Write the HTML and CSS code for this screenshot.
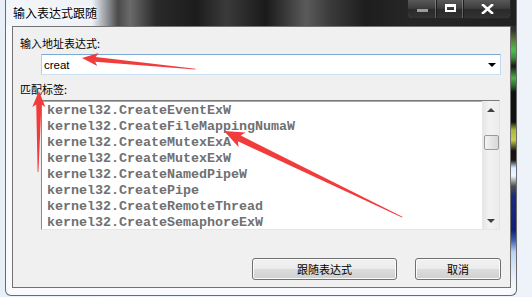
FILE: index.html
```html
<!DOCTYPE html>
<html lang="zh-CN">
<head>
    <meta charset="UTF-8">
    <title>输入表达式跟随</title>
    <link rel="stylesheet" href="styles.css">
</head>
<body>
    <div class="desk">
        <div class="window">
            <div class="titlebar">
                <span class="title">输入表达式跟随</span>
                <div class="caption-btns">
                    <span class="cb cb-min"><i class="min-bar"></i></span>
                    <span class="cb cb-max"><i class="max-box"></i></span>
                    <span class="cb cb-close">
                        <svg width="13" height="10" viewBox="0 0 13 10">
                            <path d="M2 1 L11 9 M11 1 L2 9" stroke="#fff" stroke-width="2.6" stroke-linecap="square"/>
                        </svg>
                    </span>
                </div>
            </div>

            <div class="client">
                <div class="label">输入地址表达式:</div>
                <div class="combo">
                    <span class="combo-text">creat</span>
                    <span class="combo-arrow"></span>
                </div>

                <div class="label">匹配标签:</div>
                <div class="list">
                    <div class="items">
                        <div class="item">kernel32.CreateEventExW</div>
                        <div class="item">kernel32.CreateFileMappingNumaW</div>
                        <div class="item">kernel32.CreateMutexExA</div>
                        <div class="item">kernel32.CreateMutexExW</div>
                        <div class="item">kernel32.CreateNamedPipeW</div>
                        <div class="item">kernel32.CreatePipe</div>
                        <div class="item">kernel32.CreateRemoteThread</div>
                        <div class="item">kernel32.CreateSemaphoreExW</div>
                    </div>
                    <div class="scrollbar">
                        <div class="sb-btn"><span class="tri-up"></span></div>
                        <div class="sb-thumb"></div>
                        <div class="sb-track"></div>
                        <div class="sb-btn"><span class="tri-down"></span></div>
                    </div>
                </div>

                <div class="buttons">
                    <button class="btn btn-follow">跟随表达式</button>
                    <button class="btn btn-cancel">取消</button>
                </div>
            </div>
        </div>

        <!-- red annotation arrows drawn over the dialog -->
        <svg class="marks" width="532" height="297" viewBox="0 0 532 297">
            <g fill="#f23c3c">
                <polygon transform="translate(82 58) rotate(5.6)" points="0,0 16,-6.5 13.5,-2.4 114,-0.4 114,0.4 13.5,2.4 16,6.5"/>
                <polygon transform="translate(39 91) rotate(90.7)" points="0,0 16,-6.5 13.5,-2.6 81,-0.4 81,0.4 13.5,2.6 16,6.5"/>
                <polygon transform="translate(224 131) rotate(25.8)" points="0,0 20,-8 17,-3.2 198,-0.4 198,0.4 17,3.2 20,8"/>
            </g>
        </svg>
    </div>
</body>
</html>
```

FILE: styles.css
```css
* {
    box-sizing: border-box;
}
body {
    margin: 0;
    background: #ecf1f9;
    font-family: "Noto Sans CJK SC", "Liberation Sans", sans-serif;
}
.desk {
    position: relative;
    width: 532px;
    height: 297px;
    overflow: hidden;
    padding-left: 5px;
    background: linear-gradient(to right, #e9eff8 0, #eef2f9 100%);
}
.window {
    width: 512px;
    height: 296px;
    display: flex;
    flex-direction: column;
    border: 1px solid #6b6b6b;
    border-top: 0;
    border-radius: 0 0 6px 6px;
    background:
        linear-gradient(to bottom,
            #2e2e2e 0, #303030 30px, #5a7a38 40px, #4cc04c 50px, #3d8a3d 58px,
            #161616 66px, #4caf4c 78px, #2a6a2a 86px, #111 92px, #111 122px,
            #a9b83a 130px, #c8cc4c 140px, #111 151px, #151515 160px, #dbeeff 168px,
            #eef7ff 176px, #505050 186px, #1c2a7a 196px, #0f1f78 230px, #3d5bb0 240px,
            #b9d3f0 252px, #dce9f8 270px, #f3f7fc 285px) right top / 5px 100% no-repeat,
        #f8fafd;
}
.titlebar {
    display: flex;
    height: 26px;
    background: linear-gradient(to right,
        #f3f6fa 0, #eef2f7 86px, #a4a8ad 98px, #4a4a4a 112px, #6a6a6a 124px,
        #2a2a2a 150px, #1c1c1c 190px, #3a3a3a 220px, #1a1a1a 260px,
        #5a5a5a 300px, #3a3a3a 325px, #1d1d1d 360px, #262626 400px, #202020 100%);
}
.title {
    padding: 5px 0 0 7px;
    font-size: 12px;
    line-height: 16px;
    color: #000;
    text-shadow: 0 0 6px #fff, 0 0 3px #fff;
}
.caption-btns {
    display: flex;
    margin-left: auto;
    margin-right: 5px;
    height: 19px;
    border: 1px solid #262626;
    border-top: 0;
    border-radius: 0 0 5px 5px;
    overflow: hidden;
    box-shadow: inset 0 -1px 0 rgba(255,255,255,0.35), inset 1px 0 0 rgba(255,255,255,0.25), inset -1px 0 0 rgba(255,255,255,0.25);
}
.cb {
    display: flex;
    align-items: center;
    justify-content: center;
    height: 18px;
    background: linear-gradient(to bottom, #585858 0, #3e3e3e 45%, #2a2a2a 55%, #333 100%);
}
.cb-min {
    width: 29px;
    border-right: 1px solid #1e1e1e;
    box-shadow: inset -1px 0 0 rgba(255,255,255,0.25);
}
.cb-max {
    width: 27px;
    border-right: 1px solid #1e1e1e;
    box-shadow: inset -1px 0 0 rgba(255,255,255,0.25);
}
.cb-close {
    width: 46px;
}
.min-bar {
    display: block;
    width: 11px;
    height: 3px;
    margin-top: 3px;
    background: #9c9c9c;
}
.max-box {
    display: block;
    width: 11px;
    height: 8px;
    border: 2px solid #fff;
    border-top-width: 3px;
    margin-top: -2px;
}
.client {
    height: 262px;
    margin: 0 5px 7px 6px;
    border: 1px solid #737373;
    background: #f0f0f0;
    padding-top: 8px;
}
.label {
    height: 16px;
    padding-left: 7px;
    font-size: 11px;
    line-height: 16px;
    color: #000;
}
.combo {
    display: flex;
    align-items: center;
    height: 21px;
    margin: 3px 9px 6px 28px;
    border: 1px solid;
    border-color: #7ca9d6 #c1d9f0 #c9e0f5 #b4cde6;
    background: #fff;
}
.combo-text {
    padding-left: 2px;
    font-family: "Liberation Sans", sans-serif;
    font-size: 11.5px;
    color: #000;
}
.combo-arrow {
    margin-left: auto;
    margin-right: 4px;
    width: 0;
    height: 0;
    border-left: 4px solid transparent;
    border-right: 4px solid transparent;
    border-top: 4px solid #000;
}
.list {
    display: flex;
    height: 130px;
    margin: 3px 10px 0 28px;
    border: 1px solid;
    border-color: #7a7a7a #e3e3e3 #e6e6e6 #8a8a8a;
    background: #fff;
    box-shadow: inset 0 1px 0 #a9a9a9;
}
.items {
    flex: 1;
    padding: 2px 0 0 5px;
    overflow: hidden;
    font-family: "Liberation Mono", monospace;
    font-size: 13.33px;
    font-weight: bold;
    line-height: 16px;
    color: #707070;
    white-space: nowrap;
}
.scrollbar {
    display: flex;
    flex-direction: column;
    width: 17px;
    background: linear-gradient(to right, #e6e6e6, #f2f2f2 40%, #ececec);
    border-left: 1px solid #e8e8e8;
}
.sb-btn {
    display: flex;
    align-items: center;
    justify-content: center;
    height: 17px;
}
.tri-up, .tri-down {
    width: 0;
    height: 0;
    border-left: 4px solid transparent;
    border-right: 4px solid transparent;
}
.tri-up {
    border-bottom: 4px solid #404040;
}
.tri-down {
    border-top: 4px solid #404040;
}
.sb-thumb {
    height: 15px;
    margin: 17px 0 0 1px;
    width: 15px;
    border: 1px solid #9a9a9a;
    border-radius: 2px;
    background: linear-gradient(to right, #f4f4f4, #e4e4e4 50%, #d8d8d8);
}
.sb-track {
    flex: 1;
}
.buttons {
    display: flex;
    justify-content: flex-end;
    gap: 18px;
    margin-top: 28px;
    padding-right: 9px;
}
.btn {
    height: 22px;
    padding: 0;
    border: 1px solid #707070;
    border-radius: 3px;
    background: linear-gradient(to bottom, #f2f2f2 0, #ebebeb 50%, #dddddd 50%, #cfcfcf 100%);
    box-shadow: inset 0 0 0 1px #fbfbfb;
    font-family: "Noto Sans CJK SC", sans-serif;
    font-size: 11px;
    color: #000;
}
.btn-follow {
    width: 145px;
}
.btn-cancel {
    width: 86px;
}
.marks {
    position: absolute;
    left: 0;
    top: 0;
    pointer-events: none;
}
```
